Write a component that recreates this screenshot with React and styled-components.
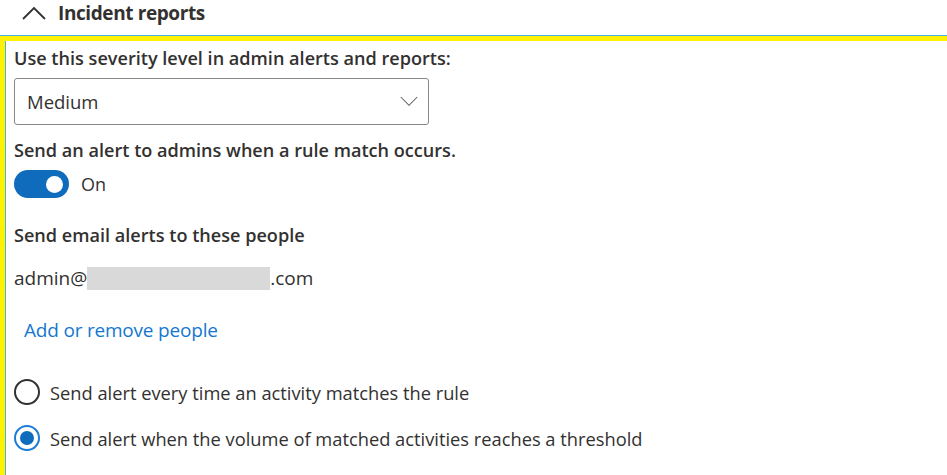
import styled, { createGlobalStyle } from "styled-components";

const GlobalStyle = createGlobalStyle`
  body {
    margin: 0;
    background: #ffffff;
    font-family: "Open Sans", "Noto Sans", Arial, sans-serif;
    color: #323130;
  }
`;

const Page = styled.div`
  width: 947px;
  height: 475px;
  overflow: hidden;
  background: #fff;
`;

const SectionHeader = styled.div`
  display: flex;
  align-items: center;
  gap: 12px;
  height: 25px;
  padding: 0 0 10px 22px;
  font-size: 19px;
  font-weight: 700;
  color: #323130;
  letter-spacing: -0.4px;
`;

const Panel = styled.div`
  border-top: 1px solid #41b6e6;
`;

const Highlight = styled.div`
  border-top: 5px solid #fff200;
  border-left: 5px solid #fff200;
`;

const Body = styled.div`
  border-left: 1px solid #41b6e6;
  padding: 5px 0 0 8px;
  height: 440px;
  display: flex;
  flex-direction: column;
`;

const Label = styled.div`
  font-size: 18.1px;
  font-weight: 600;
  line-height: 24px;
  margin-top: ${({ $top }) => $top || 0}px;
`;

const Text = styled.div`
  font-size: 19px;
  line-height: 24px;
  display: flex;
  align-items: center;
  margin-top: ${({ $top }) => $top || 0}px;
`;

const Select = styled.div`
  width: 415px;
  height: 47px;
  box-sizing: border-box;
  border: 1px solid #8a8886;
  border-radius: 3px;
  display: flex;
  align-items: center;
  justify-content: space-between;
  padding: 0 10px 0 12px;
  margin-top: 8px;
  font-size: 18.5px;
  color: #323130;
`;

const ToggleRow = styled.div`
  display: flex;
  align-items: center;
  gap: 12px;
  margin-top: 8px;
  font-size: 18px;
`;

const Track = styled.div`
  width: 55px;
  height: 28px;
  border-radius: 14px;
  background: #0f6cbd;
  display: flex;
  align-items: center;
  justify-content: flex-end;
  padding-right: 6px;
  box-sizing: border-box;
`;

const Knob = styled.div`
  width: 17px;
  height: 17px;
  border-radius: 50%;
  background: #fff;
`;

const Redacted = styled.span`
  display: inline-block;
  width: 183px;
  height: 23px;
  background: #d9d9d9;
`;

const Link = styled.a`
  font-size: 19px;
  color: #1477cf;
  text-decoration: none;
  margin: 27px 0 0 10px;
  line-height: 26px;
  letter-spacing: -0.2px;
`;

const RadioRow = styled.div`
  display: flex;
  align-items: center;
  gap: 10px;
  font-size: 18.3px;
  margin-top: ${({ $top }) => $top}px;
`;

const Radio = styled.div`
  width: 26px;
  height: 26px;
  box-sizing: border-box;
  border-radius: 50%;
  border: 2px solid ${({ $checked }) => ($checked ? "#1e7bd6" : "#323130")};
  display: flex;
  align-items: center;
  justify-content: center;

  &::after {
    content: "";
    width: 14px;
    height: 14px;
    border-radius: 50%;
    background: ${({ $checked }) => ($checked ? "#0f6cbd" : "transparent")};
  }
`;

const Chevron = ({ up, size = 24 }) => (
  <svg width={size} height={size / 2 + 2} viewBox="0 0 24 14" fill="none">
    <path
      d={up ? "M1 13 L12 2 L23 13" : "M1 1 L12 12 L23 1"}
      stroke={up ? "#323130" : "#605e5c"}
      strokeWidth={up ? 1.8 : 1.4}
    />
  </svg>
);

export default function App() {
  return (
    <Page>
      <GlobalStyle />
      <SectionHeader>
        <Chevron up size={24} />
        Incident reports
      </SectionHeader>
      <Panel>
        <Highlight>
          <Body>
            <Label>Use this severity level in admin alerts and reports:</Label>
            <Select>
              Medium
              <Chevron size={18} />
            </Select>
            <Label $top={13}>Send an alert to admins when a rule match occurs.</Label>
            <ToggleRow>
              <Track>
                <Knob />
              </Track>
              On
            </ToggleRow>
            <Label $top={25}>Send email alerts to these people</Label>
            <Text $top={19}>
              admin@<Redacted />.com
            </Text>
            <Link href="#">Add or remove people</Link>
            <RadioRow $top={36}>
              <Radio />
              Send alert every time an activity matches the rule
            </RadioRow>
            <RadioRow $top={20}>
              <Radio $checked />
              Send alert when the volume of matched activities reaches a threshold
            </RadioRow>
          </Body>
        </Highlight>
      </Panel>
    </Page>
  );
}
